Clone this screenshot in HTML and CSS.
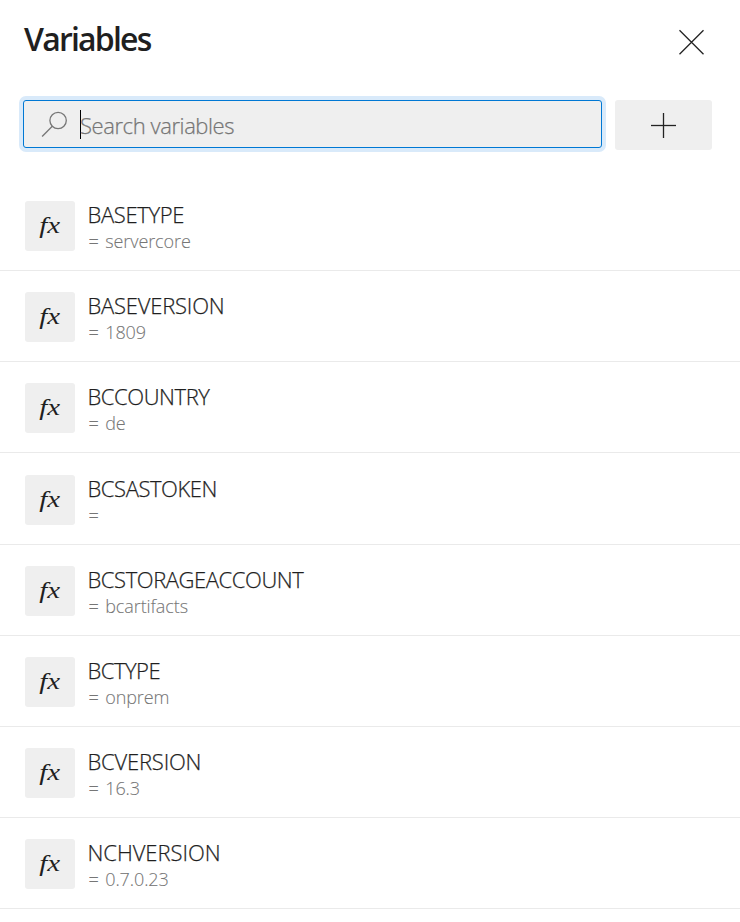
FILE: index.html
```html
<!DOCTYPE html>
<html lang="en">
<head>
<meta charset="utf-8">
<title>Variables</title>
<link rel="stylesheet" href="styles.css">
</head>
<body>
<main class="panel">
  <header class="header">
    <h1 class="title">Variables</h1>
    <button class="close" aria-label="Close"><svg width="26" height="26" viewBox="0 0 26 26"><path d="M.5 1.3 24.5 25.3M24.5 1.3.5 25.3"/></svg></button>
  </header>
  <div class="toolbar">
    <div class="search">
      <svg class="search-icon" width="27" height="27" viewBox="0 0 27 27"><circle cx="17.1" cy="9.5" r="8.2"/><path d="M11.3 15.3 1.1 25.5"/></svg>
      <span class="caret"></span>
      <span class="placeholder">Search variables</span>
    </div>
    <button class="add" aria-label="Add variable"><svg width="26" height="26" viewBox="0 0 26 26"><path d="M0 13.5H25"/><path d="M12.5 1V26"/></svg></button>
  </div>
  <ul class="list">
    <li class="row"><span class="fx"><i>fx</i></span><div class="info"><span class="name n1">BASETYPE</span><span class="value">= servercore</span></div></li>
    <li class="row"><span class="fx"><i>fx</i></span><div class="info"><span class="name n2">BASEVERSION</span><span class="value">= 1809</span></div></li>
    <li class="row"><span class="fx"><i>fx</i></span><div class="info"><span class="name n3">BCCOUNTRY</span><span class="value">= de</span></div></li>
    <li class="row row-tall"><span class="fx"><i>fx</i></span><div class="info"><span class="name n4">BCSASTOKEN</span><span class="value">=</span></div></li>
    <li class="row"><span class="fx"><i>fx</i></span><div class="info"><span class="name n5">BCSTORAGEACCOUNT</span><span class="value">= bcartifacts</span></div></li>
    <li class="row"><span class="fx"><i>fx</i></span><div class="info"><span class="name n6">BCTYPE</span><span class="value">= onprem</span></div></li>
    <li class="row"><span class="fx"><i>fx</i></span><div class="info"><span class="name n7">BCVERSION</span><span class="value">= 16.3</span></div></li>
    <li class="row"><span class="fx"><i>fx</i></span><div class="info"><span class="name n8">NCHVERSION</span><span class="value">= 0.7.0.23</span></div></li>
  </ul>
</main>
</body>
</html>
```
FILE: styles.css
```css
* { box-sizing: border-box; }
body { margin: 0; background: #fff; color: #1f1f1f; font-family: "Open Sans", "Noto Sans", sans-serif; overflow: hidden; }
button { border: 0; padding: 0; background: none; display: flex; align-items: center; justify-content: center; }
svg { display: block; fill: none; stroke: #222; stroke-width: 1.3; }
.header { height: 100px; padding: 17px 35px 0 24px; display: flex; justify-content: space-between; align-items: flex-start; }
.title { margin: 0; font-size: 32px; line-height: 44px; font-weight: 600; letter-spacing: -1.8px; }
.close { width: 26px; height: 26px; margin-top: 12px; }
.toolbar { display: flex; padding: 0 28px 0 23px; gap: 13px; height: 79px; align-items: flex-start; }
.search { width: 579px; height: 48px; display: flex; align-items: center; padding-left: 17px; background: #efefef; border: 1px solid #0078d4; border-radius: 3px; box-shadow: 0 0 0 4px #d9eafa; }
.search-icon { stroke: #767676; }
.caret { width: 1px; height: 29px; background: #000; margin-left: 12px; }
.placeholder { color: #767676; font-size: 22px; line-height: 30px; font-weight: 350; margin: 2px 0 0 -1px; letter-spacing: -.42px; -webkit-text-stroke: .25px; }
.add { width: 97px; height: 50px; background: #efefef; border-radius: 3px; }
.list { margin: 0; padding: 0; list-style: none; }
.row { height: 91px; padding: 21px 25px 0; display: flex; gap: 12.5px; border-bottom: 1px solid #eaeaea; }
.row:first-child { height: 92px; padding-top: 22px; }
.row-tall { height: 92px; padding-top: 22px; }
.fx { width: 50px; height: 50px; border-radius: 3px; background: #efefef; font: italic 24px/48px "Liberation Serif", serif; text-align: center; }
.fx i { display: inline-block; transform: scaleX(1.2); }
.info { display: flex; flex-direction: column; align-items: flex-start; }
.name { font-size: 22px; line-height: 28px; margin-top: -1px; font-weight: 340; white-space: nowrap; letter-spacing: -.5px; -webkit-text-stroke: .25px; }
.value { font-size: 18px; line-height: 24px; margin: 1px 0 0 1px; font-weight: 340; color: #767676; white-space: pre; word-spacing: 2px; letter-spacing: -.1px; -webkit-text-stroke: .1px; }
.n1 { letter-spacing: -.35px; }
.n2 { letter-spacing: -.22px; }
.n3, .n4, .n5 { letter-spacing: -.43px; }
.n7 { letter-spacing: -.2px; }
.n8 { letter-spacing: -.05px; }
```
